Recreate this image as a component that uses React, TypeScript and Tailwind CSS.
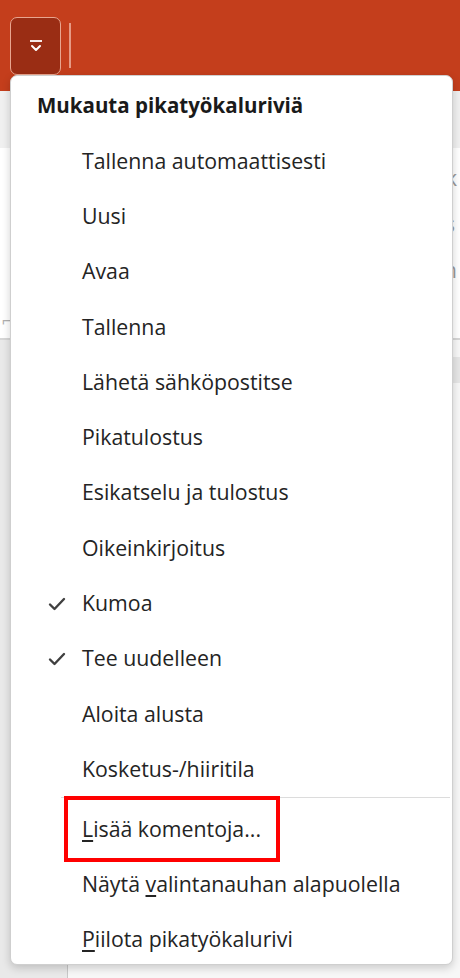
import React from 'react';

const items = [
  { label: 'Tallenna automaattisesti' },
  { label: 'Uusi' },
  { label: 'Avaa' },
  { label: 'Tallenna' },
  { label: 'Lähetä sähköpostitse' },
  { label: 'Pikatulostus' },
  { label: 'Esikatselu ja tulostus' },
  { label: 'Oikeinkirjoitus' },
  { label: 'Kumoa', checked: true },
  { label: 'Tee uudelleen', checked: true },
  { label: 'Aloita alusta' },
  { label: 'Kosketus-/hiiritila' },
];

function Check() {
  return (
    <svg width="18" height="14" viewBox="0 0 18 14" fill="none">
      <path d="M2 7.5 L6.5 12 L16 2" stroke="#404040" strokeWidth="2.4" strokeLinecap="round" strokeLinejoin="round" />
    </svg>
  );
}

export default function App() {
  const font = { fontFamily: '"Open Sans", "Noto Sans", sans-serif' };
  return (
    <div className="relative w-[460px] h-[978px] overflow-hidden bg-[#f3f3f3]" style={font}>
      {/* title bar */}
      <div className="h-[91px] bg-[#c43e1c] flex items-start pl-[10px] pt-[17px] gap-[8px]">
        <div className="w-[51px] h-[58px] rounded-[7px] border border-[#e8a58f] bg-[#9a2d14] flex items-center justify-center">
          <svg width="16" height="14" viewBox="0 0 16 14" fill="none">
            <path d="M2 2 H14" stroke="white" strokeWidth="1.8" />
            <path d="M4 7 L8 11 L12 7" stroke="white" strokeWidth="2" strokeLinecap="round" strokeLinejoin="round" />
          </svg>
        </div>
        <div className="w-[2px] h-[45px] mt-[6px] bg-[#e69a85]" />
      </div>

      {/* ribbon behind */}
      <div className="h-[57px] bg-[#f0f0f0]" />
      <div className="h-[190px] bg-white flex justify-between text-[#9a9a9a] text-[21px]">
        <div className="pt-[160px] pl-[2px] text-[#b0b0b0] text-[16px]">⌐</div>
        <div className="flex flex-col gap-[18px] pt-[16px] w-[12px] leading-[28px]">
          <span className="-ml-[2px]">k</span>
          <span className="-ml-[3px]">s</span>
          <span className="-ml-[4px]">n</span>
        </div>
      </div>
      <div className="h-[2px] bg-[#d6d6d6]" />
      <div className="flex h-[640px]">
        <div className="w-[68px] bg-[#e9e9e9] border-r border-[#c8c8c8]" />
        <div className="flex-1 flex flex-col">
          <div className="h-[17px] bg-[#f7f7f7]" />
          <div className="h-[26px] bg-[#e6e6e6]" />
          <div className="flex-1 bg-[#f7f7f7]" />
        </div>
      </div>

      {/* dropdown menu */}
      <div className="absolute left-[10px] top-[75px] w-[443px] h-[890px] bg-white border border-[#cfcfcf] rounded-[7px] shadow-[0_3px_8px_rgba(0,0,0,0.18)] text-[#242424]">
        <div className="pl-[26px] pt-[14px] h-[57px] text-[20.5px] font-bold text-[#1a1a1a]">Mukauta pikatyökaluriviä</div>
        <div className="flex flex-col">
          {items.map((it) => (
            <div key={it.label} className="h-[55.3px] flex items-center text-[21.3px]">
              <div className="w-[71px] flex justify-end pr-[16px] pt-[2px]">
                {it.checked ? <Check /> : null}
              </div>
              <span>{it.label}</span>
            </div>
          ))}
        </div>
        <div className="ml-[50px] mr-[2px] h-px bg-[#dcdcdc]" />
        <div className="flex flex-col pt-[4px] text-[21.3px]">
          <div className="relative h-[55px] flex items-center pl-[71px]">
            <div className="absolute left-[53px] top-[-6px] w-[216px] h-[66px] border-[4px] border-[#ff0000]" />
            <span><span className="underline underline-offset-[3px]">L</span>isää komentoja...</span>
          </div>
          <div className="h-[55px] flex items-center pl-[71px]">
            <span>Näytä <span className="underline underline-offset-[3px]">v</span>alintanauhan alapuolella</span>
          </div>
          <div className="h-[55px] flex items-center pl-[71px]">
            <span><span className="underline underline-offset-[3px]">P</span>iilota pikatyökalurivi</span>
          </div>
        </div>
      </div>
    </div>
  );
}
